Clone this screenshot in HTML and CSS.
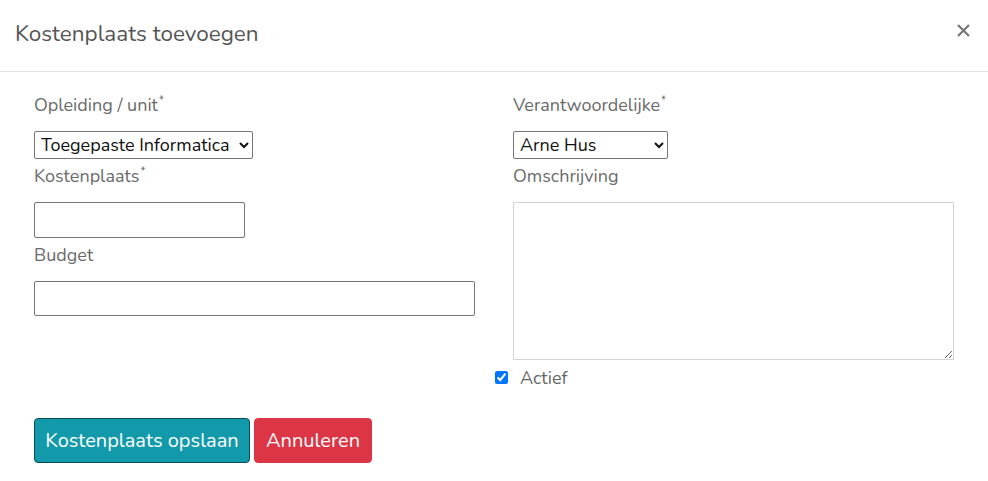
FILE: index.html
```html
<!DOCTYPE html>
<html>
<head>
<meta charset="utf-8">
<link rel="stylesheet" href="styles.css">
</head>
<body>
<div class="modal">
  <div class="modal-header">
    <h5 class="modal-title">Kostenplaats toevoegen</h5>
    <button class="close" type="button" aria-label="Sluiten">
      <svg width="13" height="13" viewBox="0 0 13 13"><path d="M1 1L12 12M12 1L1 12" stroke="#777" stroke-width="2.2" stroke-linecap="butt"/></svg>
    </button>
  </div>
  <div class="modal-body">
    <div class="cols">
      <div class="col">
        <div class="group">
          <label class="lbl">Opleiding / unit<sup>*</sup></label>
          <select class="sel sel-opl"><option>Toegepaste Informatica</option></select>
        </div>
        <div class="group">
          <label class="lbl">Kostenplaats<sup>*</sup></label>
          <input class="inp inp-short" type="text">
        </div>
        <div class="group">
          <label class="lbl">Budget</label>
          <input class="inp inp-full" type="text">
        </div>
      </div>
      <div class="col">
        <div class="group">
          <label class="lbl">Verantwoordelijke<sup>*</sup></label>
          <select class="sel sel-ver"><option>Arne Hus</option></select>
        </div>
        <div class="group">
          <label class="lbl">Omschrijving</label>
          <textarea class="txt"></textarea>
        </div>
        <div class="check">
          <input type="checkbox" checked>
          <span>Actief</span>
        </div>
      </div>
    </div>
    <div class="actions">
      <button class="btn btn-save" type="button">Kostenplaats opslaan</button>
      <button class="btn btn-cancel" type="button">Annuleren</button>
    </div>
  </div>
</div>
</body>
</html>
```

FILE: styles.css
```css
html, body {
  margin: 0;
  padding: 0;
  background: #fff;
}
body {
  font-family: "Nunito", "Lato", "Noto Sans", sans-serif;
  color: #666;
}
.modal {
  width: 988px;
}
.modal-header {
  height: 72px;
  box-sizing: border-box;
  border-bottom: 1px solid #dee2e6;
  display: flex;
  align-items: center;
  justify-content: space-between;
  padding: 0 18px 0 15px;
}
.modal-title {
  margin: 0;
  font-size: 22.5px;
  font-weight: 400;
  color: #555;
  padding-bottom: 4px;
}
.close {
  border: 0;
  background: none;
  padding: 0;
  width: 13px;
  height: 13px;
  display: flex;
  margin-bottom: 10px;
}
.modal-body {
  padding: 21px 34px 0 34px;
}
.cols {
  display: grid;
  grid-template-columns: 441px 441px;
  column-gap: 38px;
}
.col {
  display: flex;
  flex-direction: column;
}
.group {
  display: flex;
  flex-direction: column;
  align-items: flex-start;
  margin-bottom: 5px;
}
.lbl {
  font-size: 18px;
  line-height: 25px;
  margin-bottom: 13px;
  color: #6a6a6a;
}
.lbl sup {
  font-size: 11px;
  line-height: 0;
  vertical-align: 7px;
  margin-left: 1px;
}
.sel {
  height: 28px;
  font-family: inherit;
  font-size: 18px;
  color: #111;
  border: 1px solid #767676;
  border-radius: 2px;
  background: #fff;
  padding: 0 2px;
}
.sel-opl { width: 219px; }
.sel-ver { width: 155px; }
.inp {
  box-sizing: border-box;
  height: 36px;
  border: 1px solid #767676;
  border-radius: 2px;
  background: #fff;
}
.inp-short { width: 211px; }
.inp-full { width: 441px; height: 35px; }
.txt {
  box-sizing: border-box;
  width: 441px;
  height: 158px;
  border: 1px solid #d4d4d4;
  border-radius: 0;
  resize: vertical;
}
.check {
  display: flex;
  align-items: center;
  margin-left: -18px;
  height: 25px;
  font-size: 18px;
  color: #666;
}
.check input {
  width: 13px;
  height: 13px;
  margin: 0 12px 0 0;
  accent-color: #0075ff;
}
.actions {
  display: flex;
  gap: 4px;
  margin-top: 28px;
}
.btn {
  height: 45px;
  box-sizing: border-box;
  border-radius: 4px;
  font-family: inherit;
  font-size: 20px;
  color: #fff;
  padding: 0 10px;
  cursor: pointer;
}
.btn-save {
  background: #129aaa;
  border: 1px solid #0b4d57;
  width: 216px;
}
.btn-cancel {
  background: #dc3545;
  border: 1px solid #dc3545;
  width: 118px;
}
```
